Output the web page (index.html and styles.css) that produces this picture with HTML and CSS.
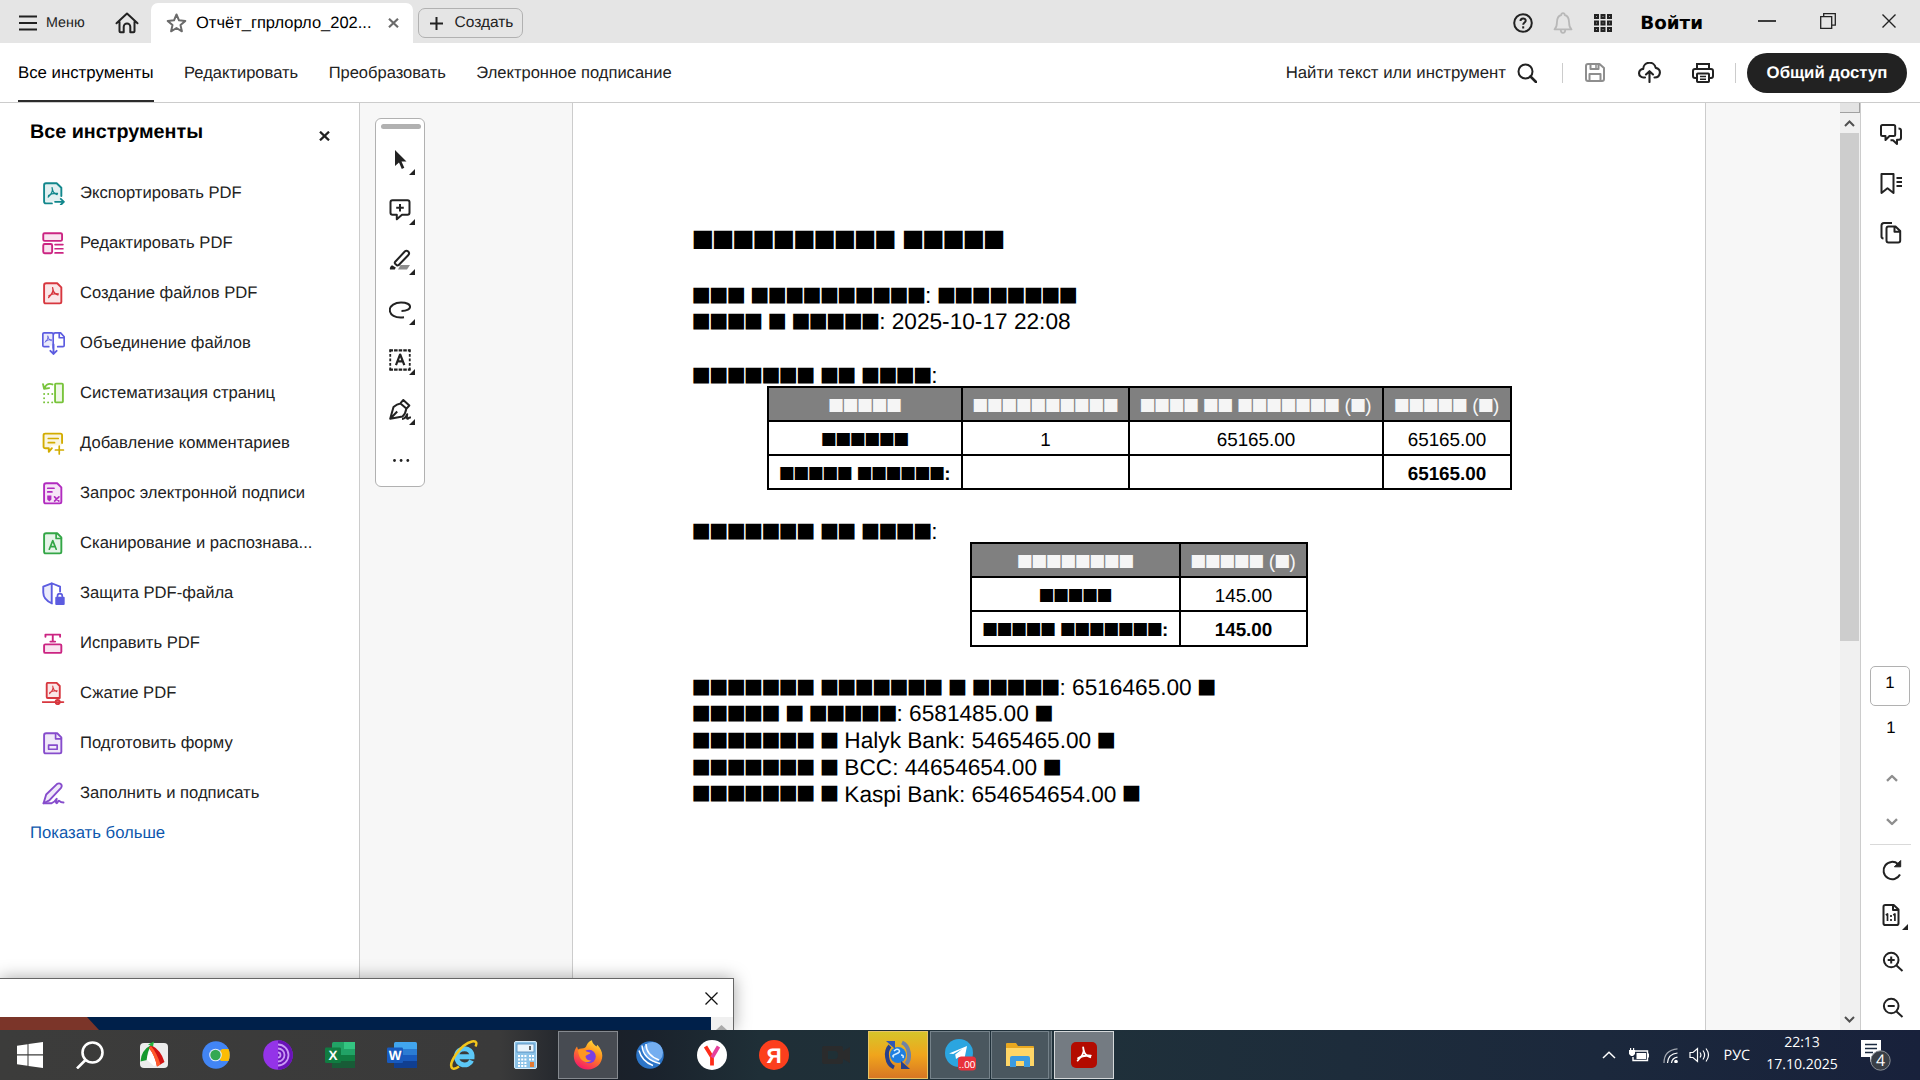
FILE: index.html
```html
<!DOCTYPE html>
<html lang="ru">
<head>
<meta charset="utf-8">
<title>Отчёт</title>
<link rel="stylesheet" href="styles.css">
</head>
<body>
<svg class="defs" width="0" height="0">
  <defs>
    <symbol id="pdfmark" viewBox="0 0 12 12"><path d="M5.400 1c1 2.800-.9 6.500-3.900 9.300M1.800 8.700c2.600-1.800 5.500-2.300 9-1.900M5.700 2.500c.3 2.500 2 4.400 4.700 5.400" fill="none" stroke="currentColor" stroke-width="1.300" stroke-linecap="round"/></symbol>
    <symbol id="corner" viewBox="0 0 6 6"><path d="M6 0v6H0z" fill="#222"/></symbol>
  </defs>
</svg>

<header class="titlebar">
  <div class="menu">
    <svg width="18" height="16" viewBox="0 0 18 16"><path d="M0 1.500h18M0 8h18M0 14.500h18" stroke="#222" stroke-width="2"/></svg>
    <span>Меню</span>
  </div>
  <svg class="home" width="24" height="22" viewBox="0 0 24 22" fill="none" stroke="#222" stroke-width="2" stroke-linejoin="round" stroke-linecap="round"><path d="M1.500 11.200 12 1.500l10.500 9.700M4.500 10v9.200q0 1 1 1H8.700v-5.500a3.300 3.300 0 0 1 6.600 0v5.500h3.200q1 0 1-1V10"/></svg>
  <div class="tab">
    <svg width="21" height="20" viewBox="0 0 21 20" fill="none" stroke="#6b6b6b" stroke-width="2" stroke-linejoin="round"><path d="m10.500 1.500 2.500 5.800 6.300.6-4.800 4.200 1.400 6.200-5.400-3.300-5.400 3.300 1.400-6.200-4.800-4.200 6.300-.6z"/></svg>
    <span class="tab-name">Отчёт_гпрлорло_202...</span>
    <svg class="tab-x" width="11" height="10" viewBox="0 0 11 10"><path d="m1 .8 9 8.400m0-8.400L1 9.200" stroke="#6b6b6b" stroke-width="2.200"/></svg>
  </div>
  <div class="create">
    <svg width="13" height="13" viewBox="0 0 13 13"><path d="M6.500 0v13M0 6.500h13" stroke="#222" stroke-width="2"/></svg>
    <span>Создать</span>
  </div>
  <div class="window-tools">
    <svg width="20" height="20" viewBox="0 0 20 20" fill="none" stroke="#222" stroke-width="2"><circle cx="10" cy="10" r="8.800"/><path d="M7.500 8c0-3.300 5.200-3.300 5.200-.2 0 1.800-2.500 1.800-2.500 4"/><path d="M10.200 13.300v2.200"/></svg>
    <svg class="bell" width="20" height="22" viewBox="0 0 20 22" fill="none" stroke="#b8b8b8" stroke-width="1.800" stroke-linejoin="round"><path d="M1.500 17.300c2.200-2 2.400-3.400 2.400-6.500 0-5 2.300-7.300 4.400-7.800 0-2.400 3.400-2.400 3.400 0 2.100.5 4.400 2.800 4.400 7.800 0 3.100.2 4.500 2.400 6.500z"/><path d="M7.800 18c0 3.700 4.400 3.700 4.400 0"/></svg>
    <svg class="apps" width="18" height="18" viewBox="0 0 18 18"><path d="M0 0h5v5H0zM6.500 0h5v5h-5zM13 0h5v5h-5zM0 6.500h5v5H0zM6.500 6.500h5v5h-5zM13 6.500h5v5h-5zM0 13h5v5H0zM6.500 13h5v5h-5zM13 13h5v5h-5z" fill="#222"/><path d="M2 2.500h1m5.500 0h1m5.500 0h1M2 9h1m5.500 0h1M15 9h1M2 15.500h1m5.500 0h1m5.500 0h1" stroke="#999"/></svg>
    <b class="login">Войти</b>
    <svg class="win-min" width="18" height="16" viewBox="0 0 18 16"><path d="M0 8h18" stroke="#111" stroke-width="1.600"/></svg>
    <svg class="win-max" width="16" height="16" viewBox="0 0 16 16" fill="none" stroke="#222" stroke-width="1.300"><path d="M.7 3.700h11v11.600H.7zM3.700 3.500V.7h11.600v11.500h-3.500"/></svg>
    <svg class="win-close" width="14" height="14" viewBox="0 0 14 14"><path d="m.5.500 13 13m0-13-13 13" stroke="#222" stroke-width="1.400"/></svg>
  </div>
</header>

<nav class="toolbar">
  <div class="modes">
    <span class="active">Все инструменты</span><span>Редактировать</span><span>Преобразовать</span><span>Электронное подписание</span>
  </div>
  <div class="actions">
    <span class="find">Найти текст или инструмент</span>
    <svg class="mag" width="20" height="20" viewBox="0 0 20 20" fill="none" stroke="#222" stroke-width="2"><circle cx="8.500" cy="8.500" r="7"/><path d="m13.500 13.500 5.500 5.500" stroke-width="2.600" stroke-linecap="round"/></svg>
    <i class="vline v1"></i>
    <svg class="save" width="20" height="19" viewBox="0 0 20 19" fill="none" stroke="#8e8e8e" stroke-width="2" stroke-linejoin="round"><path d="M1 3q0-2 2-2h11.500L19 5v11q0 2-2 2H3q-2 0-2-2zM5.500 1v5h8V1M4.500 18v-7h11v7"/><path d="M11 2v3" stroke-width="1.500"/></svg>
    <svg class="cloud" width="23" height="21" viewBox="0 0 23 21" fill="none" stroke="#222" stroke-width="2.100" stroke-linecap="round" stroke-linejoin="round"><path d="M7 15.500H5.500a4.300 4.300 0 0 1-.3-8.600 6.300 6.300 0 0 1 12.500-1c6 .5 5.500 9.600-1.200 9.600M11.500 20V9.500M8 12.500l3.500-3.300 3.500 3.300"/></svg>
    <svg class="print" width="22" height="20" viewBox="0 0 22 20" fill="none" stroke="#222" stroke-width="2"><path d="M5 6V1h12v5M5 15H3q-2 0-2-2V8q0-2 2-2h16q2 0 2 2v5q0 2-2 2h-2"/><rect x="5" y="10.500" width="12" height="8.500" rx=".8"/><path d="M8 13.500h6M8 16.300h6" stroke-width="1.400"/></svg>
    <i class="vline v2"></i>
    <b class="share">Общий доступ</b>
  </div>
</nav>

<main class="workspace">
  <aside class="sidebar">
    <div class="side-head"><h2>Все инструменты</h2><svg width="11" height="10" viewBox="0 0 11 10"><path d="m1 .7 9 8.600m0-8.600L1 9.300" stroke="#222" stroke-width="2.300"/></svg></div>
    <ul class="tools">
      <li><svg class="teal" viewBox="0 0 22 22"><path class="t" d="M3 2h11l4 4v13H3z"/><path class="l" d="M9.500 20.500H3.800q-1.800 0-1.800-1.800V3q0-1.800 1.800-1.800h10.200l4.500 4.300v8"/><use href="#pdfmark" x="4.500" y="4.500" width="11.500" height="11.500"/><path class="l" d="M12.500 19h8.500m-3-2.800 2.900 2.800L18 21.800"/></svg>Экспортировать PDF</li>
      <li><svg class="pink" viewBox="0 0 22 22"><g class="l b"><rect x="1.200" y="1.200" width="18" height="7.300" rx="1.300"/><rect x="1.200" y="11.500" width="8.500" height="8.800" rx="1.300"/></g><path class="l s" d="M12.500 12H20m-7.500 4H20m-7.500 4H20"/></svg>Редактировать PDF</li>
      <li><svg class="red" viewBox="0 0 22 22"><path class="l b" d="M4 1.200h10.500l4 4V19q0 1.500-1.500 1.500H3.500Q2 20.500 2 19V3q0-1.800 2-1.800z"/><use href="#pdfmark" x="4.800" y="4.500" width="12" height="12"/></svg>Создание файлов PDF</li>
      <li><svg class="indigo" viewBox="0 0 22 22"><path class="t" d="M1 1h9v12H1z"/><path class="l s" d="M6.500 14H2q-1.200 0-1.200-1.200V2Q.8.800 2 .8h7.500q1.200 0 1.200 1.500v13M15 14h5q1.200 0 1.200-1.200V4.500L17.800.8h-5.300q-1.500 0-1.500 1.500M16.500 1v4.500H21"/><use href="#pdfmark" x="2" y="3" width="8" height="8"/><path class="l" d="M11 12v9m-3-3 3 3 3-3"/></svg>Объединение файлов</li>
      <li><svg class="green" viewBox="0 0 22 22"><rect class="l b" x="12.500" y="1.500" width="7.500" height="18" rx=".8"/><path class="l" d="M10 2.300C6.500 1 4 2.500 2.500 5.500M1 2l1 4.500 4.700-.7"/><path class="l" stroke-dasharray=".1 3.800" d="M2 11.500h8.500M2 15.500v4h8.500"/></svg>Систематизация страниц</li>
      <li><svg class="gold" viewBox="0 0 22 22"><path class="t" d="M2 2h17v11H9l-2 6v-4H2z"/><path class="l" d="M9.500 15.500 6.500 19v-3.500H3.200Q1.500 15.500 1.500 14V3q0-1.500 1.500-1.500h14.700q1.500 0 1.500 1.500v7.500"/><path class="l s" d="M6 6.200h9.500M6 10.200h6M16.500 13.500V21M12.800 17.200h7.700"/></svg>Добавление комментариев</li>
      <li><svg class="magenta" viewBox="0 0 22 22"><path class="l b" d="M4 1.200h10.500l4 4V19q0 1.500-1.500 1.500H3.500Q2 20.500 2 19V3q0-1.800 2-1.800z"/><path class="l s" d="M5.500 6h6M5.500 9.500h4M12 14.200l4.200 4m0-4-4.200 4"/><path fill="currentColor" d="M5 13h4v3.800l-2 1.800-2-1.800z"/></svg>Запрос электронной подписи</li>
      <li><svg class="leaf" viewBox="0 0 22 22"><path class="l b" d="M4 1.200h10.500l4 4V19q0 1.500-1.500 1.500H3.500Q2 20.500 2 19V3q0-1.800 2-1.800z"/><path class="l s" d="M13.500 1.500v4.700h5"/><path class="l s" d="m7 16.500 3.300-8.300 3.300 8.300M8 14h4.700"/></svg>Сканирование и распознава...</li>
      <li><svg class="indigo" viewBox="0 0 22 22"><path class="t" d="M9 1 1.500 4v9q2 5 7.500 8z"/><path class="l" d="M9.500 20.500C4 18 1.200 14.500 1.200 10V4.500L9.300 1.200l8 3.300V9M9.300 1.200v19"/><path class="l s" d="M14.800 15v-1.500a2.300 2.300 0 0 1 4.600 0V15"/><rect x="12.700" y="14" width="9" height="8" rx="1" fill="currentColor"/></svg>Защита PDF-файла</li>
      <li><svg class="pink" viewBox="0 0 22 22"><rect class="l b" x="2" y="11.800" width="16.500" height="8.200" rx="1.200"/><path class="l" d="M3.300 4.500V2.500h14v2M10.300 2.500v6.700M8 9.200h4.600"/></svg>Исправить PDF</li>
      <li><svg class="red" viewBox="0 0 22 22"><path class="l b" d="M5.500.800h8.500l3 3v11.500H5.500q-1 0-1-1v-12q0-1.500 1-1.500z"/><use href="#pdfmark" x="6" y="3" width="9.500" height="9.500"/><path class="l s" d="M.5 19.200h20"/><circle cx="15" cy="19.200" r="2" class="l b"/></svg>Сжатие PDF</li>
      <li><svg class="violet" viewBox="0 0 22 22"><path class="l b" d="M4 1.200h10.500l4 4V19q0 1.500-1.500 1.500H3.500Q2 20.500 2 19V3q0-1.800 2-1.800z"/><path class="l s" d="M13 1.500v5h5.500M6.300 12.500h8.200v4H6.300z"/></svg>Подготовить форму</li>
      <li><svg class="violet" viewBox="0 0 22 22"><path class="l b" d="m4 12 10.500-10.200q2.200-1.200 3.800.5 1.200 1.600-.3 3.500L7 17.500l-5.500 2.800z"/><path class="l" d="M1.500 20.300h7.800c3-1 4.500-3.800 4.800-4.300-.5 2-1.300 4.300 0 4.300s1-2.500 2-2.500.5 1.800 4.500 1.800"/></svg>Заполнить и подписать</li>
    </ul>
    <a class="more">Показать больше</a>
  </aside>

  <section class="viewer">
    <div class="gutter">
      <div class="quick">
        <i class="grip"></i>
        <div><svg viewBox="0 0 22 22"><path d="M6 1v16l4-3.500L12.800 20l2.500-1.200-2.800-6.300h5z" fill="#222"/></svg><svg class="c"><use href="#corner"/></svg></div>
        <div><svg viewBox="0 0 22 22" class="k"><path d="M3.500 1.200h15q2 0 2 2v10.600q0 2-2 2h-5.500L7.800 20.300v-4.500H3.500q-2 0-2-2V3.200q0-2 2-2zM11 5v7.500M7.200 8.700h7.600"/></svg><svg class="c"><use href="#corner"/></svg></div>
        <div><svg viewBox="0 0 22 22" class="k"><path d="M11.500 16H21l-3 4.500H9z" fill="#8e8e8e" stroke="none"/><path d="m6 13 10-10.700q1.500-1.300 3.200.2 1.700 1.600.2 3.500l-9.900 10.200q-1 .6-1.700 0l-1.700-1.500q-.7-.8-.1-1.700z"/><path d="M1 20.500c-.5-1 0-3 2-4.300l3.800 2.300-1 2z" fill="#222" stroke="none"/></svg><svg class="c"><use href="#corner"/></svg></div>
        <div><svg viewBox="0 0 22 22" class="k"><path d="M15 18.300C6 19.500.8 15.800.8 11 .8 6.500 6 3.500 12 3.500c12 0 12 8.500.5 8.500"/></svg><svg class="c"><use href="#corner"/></svg></div>
        <div><svg viewBox="-.5 -.5 23 23" class="k"><path d="M0 1h22M0 21h22" stroke-dasharray="3.700 1.100" stroke-width="2.400"/><path d="M.8 0v22M21.200 0v22" stroke-dasharray="3 1.700" stroke-width="1.900"/><path d="m6.800 16.300 4.200-11h.3l4.200 11M8.300 12.500h5.700" stroke-width="2.300"/></svg><svg class="c"><use href="#corner"/></svg></div>
        <div><svg viewBox="0 0 22 22" class="k"><path d="M1.200 19.800 4.500 8q3.500-3.200 7-3.600l5.800 5.200q-.7 5-3.800 7.800zM1.500 19.500l6.700-7M11.300 4.300l3-3.300 6 5.500-3 3.300M13 20c3 0 4-1.500 5.200-4.800-.5 3-.5 4.600.3 4.600 1 0 .8-1.800 3.500-1.300"/></svg><svg class="c"><use href="#corner"/></svg></div>
        <div><svg viewBox="0 0 22 22"><g fill="#222"><circle cx="5.500" cy="11.500" r="1.400"/><circle cx="12.100" cy="11.500" r="1.400"/><circle cx="18.800" cy="11.500" r="1.400"/></g></svg></div>
      </div>
    </div>
    <article class="page">
      <h1><b class="s">■■■■■■■■■■</b> <b class="s">■■■■■</b></h1>
      <p><b class="s">■■■</b> <b class="s">■■■■■■■■■■</b>: <b class="s">■■■■■■■■</b></p>
      <p><b class="s">■■■■</b> <b class="s">■</b> <b class="s">■■■■■</b>: 2025-10-17 22:08</p>
      <p class="label"><b class="s">■■■■■■■</b> <b class="s">■■</b> <b class="s">■■■■</b>:</p>
      <div class="grid income">
        <div class="th"><b class="s">■■■■■</b></div><div class="th"><b class="s">■■■■■■■■■■</b></div><div class="th"><b class="s">■■■■</b> <b class="s">■■</b> <b class="s">■■■■■■■</b> (<b class="s">■</b>)</div><div class="th"><b class="s">■■■■■</b> (<b class="s">■</b>)</div>
        <div><b class="s">■■■■■■</b></div><div>1</div><div>65165.00</div><div>65165.00</div>
        <div class="sum"><b class="s">■■■■■</b> <b class="s">■■■■■■</b>:</div><div></div><div></div><div class="sum">65165.00</div>
      </div>
      <p class="label second"><b class="s">■■■■■■■</b> <b class="s">■■</b> <b class="s">■■■■</b>:</p>
      <div class="grid expense">
        <div class="th"><b class="s">■■■■■■■■</b></div><div class="th"><b class="s">■■■■■</b> (<b class="s">■</b>)</div>
        <div><b class="s">■■■■■</b></div><div>145.00</div>
        <div class="sum"><b class="s">■■■■■</b> <b class="s">■■■■■■■</b>:</div><div class="sum">145.00</div>
      </div>
      <div class="totals">
        <p><b class="s">■■■■■■■</b> <b class="s">■■■■■■■</b> <b class="s">■</b> <b class="s">■■■■■</b>: 6516465.00 <b class="s">■</b></p>
        <p><b class="s">■■■■■</b> <b class="s">■</b> <b class="s">■■■■■</b>: 6581485.00 <b class="s">■</b></p>
        <p><b class="s">■■■■■■■</b> <b class="s">■</b> Halyk Bank: 5465465.00 <b class="s">■</b></p>
        <p><b class="s">■■■■■■■</b> <b class="s">■</b> BCC: 44654654.00 <b class="s">■</b></p>
        <p><b class="s">■■■■■■■</b> <b class="s">■</b> Kaspi Bank: 654654654.00 <b class="s">■</b></p>
      </div>
    </article>
    <div class="scroll">
      <i class="split"></i>
      <svg width="20" height="20" viewBox="0 0 20 20"><path d="m5 13 4.500-4.500L14 13" fill="none" stroke="#505050" stroke-width="2"/></svg>
      <i class="thumb"></i>
      <svg class="down" width="20" height="20" viewBox="0 0 20 20"><path d="m5 7 4.500 4.500L14 7" fill="none" stroke="#505050" stroke-width="2"/></svg>
    </div>
  </section>

  <aside class="rail">
    <svg class="r1" width="24" height="24" viewBox="0 0 24 24"><path d="M3.500 2h11.200q1.500 0 1.500 1.500v8q0 1.500-1.500 1.500h-4.200L6.500 17v-4h-3Q2 13 2 11.500v-8Q2 2 3.500 2zM19.500 5.500q2.500 0 2.500 2v7.300q0 2-2 2h-2V21l-4-3.800h-2.500"/></svg>
    <svg class="r2" width="24" height="24" viewBox="0 0 24 24"><path d="M2.500 2h12v19l-6-4.800L2.500 21zM17.500 6H23m-5.500 4H23m-5.500 4H23"/></svg>
    <svg class="r3" width="24" height="24" viewBox="0 0 24 24"><path d="M4.500 17.500q-2-.3-2-2v-11Q2.500 2 5 2h8M9.500 5.500h7l4.700 4.500v9.500q0 2-2 2H9.500q-2 0-2-2v-12q0-2 2-2zM15.500 5.500v5.300h5.500"/></svg>
    <div class="page-box">1</div>
    <div class="page-total">1</div>
    <svg class="r4" width="12" height="8" viewBox="0 0 12 8"><path d="M1 6.800 6 2l5 4.800"/></svg>
    <svg class="r5" width="12" height="8" viewBox="0 0 12 8"><path d="M1 1.200 6 6l5-4.800"/></svg>
    <i class="hline"></i>
    <svg class="r6" width="24" height="24" viewBox="0 0 24 24"><path d="M20 16.500A8.700 8.700 0 1 1 18 6"/><path d="M20.700 2.500v6.300h-6.300z" fill="#222" stroke-width="1"/></svg>
    <div class="fit"><svg width="20" height="24" viewBox="0 0 20 24"><path d="M4.200 2h8.500l4.800 4.500v13.700q0 1.800-1.800 1.800H4.200q-1.700 0-1.700-1.800V3.800Q2.500 2 4.200 2zM12 2v5h5.500"/><path d="m4.800 12 1.700-1v7M12.200 12l1.700-1v7M10 12v2m0 2v2" stroke-width="1.700"/></svg><svg class="c"><use href="#corner"/></svg></div>
    <svg class="r8" width="24" height="24" viewBox="0 0 24 24"><circle cx="10.200" cy="10" r="7.300"/><path d="m15.500 15.500 6 5.500M6.700 10h7M10.200 6.500v7"/></svg>
    <svg class="r9" width="24" height="24" viewBox="0 0 24 24"><circle cx="10.200" cy="10" r="7.300"/><path d="m15.500 15.500 6 5.500M6.700 10h7"/></svg>
  </aside>
</main>

<div class="popup">
  <div class="popup-head"><svg width="13" height="13" viewBox="0 0 13 13"><path d="m.5.500 12 12m0-12-12 12" stroke="#111" stroke-width="1.300"/></svg></div>
  <div class="popup-body"><svg class="banner" width="711" height="13" viewBox="0 0 711 13"><path fill="#00204a" d="M0 0h711v13H0z"/><path fill="#7b3529" d="M0 0h87l12 13H0z"/></svg><div class="popup-scroll"><svg width="22" height="13" viewBox="0 0 22 13"><path d="m5 13 5.500-5 5.500 5z" fill="#aaa"/></svg></div></div>
</div>

<footer class="taskbar">
  <div class="cell"><svg width="26" height="26" viewBox="0 0 26 26"><path fill="#fff" d="M0 3.700 10.500 2.200v10.100H0zM11.500 2.100 26 0v12.300H11.500zM0 13.500h10.500v10.200L0 22.200zM11.500 13.500H26V26l-14.500-2z"/></svg></div>
  <div class="cell find-cell"><svg width="28" height="28" viewBox="0 0 28 28" fill="none" stroke="#fff" stroke-width="2.600"><circle cx="16.500" cy="11.500" r="10"/><path d="M9.500 19 1 27.500"/></svg></div>
  <div class="cell"><svg width="28" height="28" viewBox="0 0 28 28"><rect y="2" width="28" height="25" rx="4" fill="#ececec"/><path d="M12 3.500Q1 9 .5 20.500l6.500-1.500Q7 10 12 3.500z" fill="#159a2e"/><path d="M10 8 6.500 18.500 14 25l6-2z" fill="#fff"/><path d="M11 4q10 5 13.500 17L17 25.500Q15 14 9 7z" fill="#d21313"/><path d="M9 7q6 8 8 18.500l3.500-2Q17 12 11 5z" fill="#ff5a2c"/><path d="m8 3.500 6-3-1 5z" fill="#22b53c"/></svg></div>
  <div class="cell"><svg width="28" height="28" viewBox="0 0 28 28"><circle cx="14" cy="14" r="13.800" fill="#4285f4"/><path d="M14 14 20 8h6.500q2.500 6 0 12H19z" fill="#fbbc05"/><path d="M20 8h6.500l-3-4z" fill="#4285f4"/><circle cx="13.500" cy="14" r="6.300" fill="#dfe9fb"/><circle cx="13.500" cy="14" r="5.200" fill="#34a853"/></svg></div>
  <div class="cell"><svg width="30" height="30" viewBox="0 0 30 30"><circle cx="15" cy="15" r="14.800" fill="#9433e8"/><path d="M15 .2a14.800 14.800 0 0 1 0 29.600z" fill="#6a12b8"/><path d="M15 4.500a10.500 10.500 0 0 1 0 21M15 8.500a6.500 6.500 0 0 1 0 13M15 12.500a2.500 2.500 0 0 1 0 5" fill="none" stroke="#c99af5" stroke-width="1.800"/></svg></div>
  <div class="cell"><svg width="30" height="26" viewBox="0 0 30 26"><rect x="7" width="23" height="26" rx="1.500" fill="#21a366"/><path fill="#33c481" d="M19 0h11v7H19z"/><path fill="#107c41" d="M7 13h23v6H7z"/><path fill="#185c37" d="M7 19h23v7H7z"/><rect y="5.500" width="16" height="15.500" rx="1.200" fill="#107c41"/><text x="8" y="18" class="office">X</text></svg></div>
  <div class="cell"><svg width="30" height="26" viewBox="0 0 30 26"><rect x="7" width="23" height="26" rx="1.500" fill="#41a5ee"/><path fill="#2b7cd3" d="M7 7h23v6H7z"/><path fill="#185abd" d="M7 13h23v6H7z"/><path fill="#103f91" d="M7 19h23v7H7z"/><rect y="5.500" width="16" height="15.500" rx="1.200" fill="#185abd"/><text x="8" y="18" class="office">W</text></svg></div>
  <div class="cell"><svg width="30" height="30" viewBox="0 0 30 30" fill="none"><path d="M6.500 16.800H23C23.500 6 8 6 7.500 16.500c0 9.500 12 11 15 4" stroke="#5cc8f7" stroke-width="5"/><path d="M3.500 28.500C-2 24 12 4 23 1.500c5-1 5 2 3.500 5M3.500 28.500c2 1 4.500-.5 6.500-2" stroke="#f3c61c" stroke-width="2.400"/></svg></div>
  <div class="cell calc"><svg width="23" height="28" viewBox="0 0 23 28"><rect x=".5" y=".5" width="22" height="27" rx="1.500" fill="#8cc3e8" stroke="#d6ebf9"/><rect x="3" y="3" width="17" height="8" fill="#eaf5fc" stroke="#4d86b8" stroke-width=".8"/><path d="M4 15h9M4 18.500h9M4 22h9M4 25h9" stroke="#fff" stroke-width="2" stroke-dasharray="2 1.200"/><path d="M15 15h5M15 18.500h5" stroke="#fff" stroke-width="2" stroke-dasharray="2 1"/><path d="M16 21h4v5h-4z" fill="#e07a35"/><path d="M16 5v4" stroke="#333" stroke-width="1.500"/></svg></div>
  <div class="cell tile"><svg width="30" height="30" viewBox="0 0 30 30"><defs><linearGradient id="fx" x1=".8" y1="0" x2=".3" y2="1"><stop offset="0" stop-color="#ffe23c"/><stop offset=".45" stop-color="#ff8a1c"/><stop offset="1" stop-color="#f5156c"/></linearGradient></defs><path d="M15 29.500C6.500 29.500.8 23.500.8 16c0-4 1.500-7.500 3.200-9.500l1 3q1.500-1 3.500-1c3-.3 4.500-1 5-3Q15 1.500 19 .2c0 3 3 5 4.500 6.300l.8-1.700c3 3 5 7 5 11 0 7.500-6 13.700-14.300 13.700z" fill="url(#fx)"/><circle cx="16" cy="16.500" r="6.800" fill="#7b3fe4"/><path d="M5 10c4-1.500 7 0 8.500 1.500l4 1.200c-1 2.300-4.500 1.500-5 4 .8 3 3 4 6 3.800-6 4.500-13-.5-13.500-10.500z" fill="#ff9722"/></svg></div>
  <div class="cell"><svg width="28" height="28" viewBox="0 0 28 28"><circle cx="14" cy="14" r="13.800" fill="#2c75c8"/><circle cx="16.500" cy="11.500" r="10.500" fill="#74aef0"/><path d="M6 4q0 16 19 18.500Q8 26 3.500 8z" fill="#2c75c8"/><path d="M6 4.500q1 14 18 18M10 3q0 11 13 16M3 9.500q3 11 14 15" fill="none" stroke="#fff" stroke-width="1.500"/></svg></div>
  <div class="cell"><svg width="30" height="30" viewBox="0 0 30 30"><circle cx="15" cy="15" r="15" fill="#fff"/><path d="M15 25.500V17L8.500 6.500" fill="none" stroke="#ff2d1a" stroke-width="3.800"/><path d="m15 17.500 6.500-11" stroke="#e5409b" stroke-width="3.800"/></svg></div>
  <div class="cell"><svg width="30" height="30" viewBox="0 0 30 30"><circle cx="15" cy="15" r="15" fill="#fc3f1d"/><text x="15" y="22.500" class="ya">Я</text></svg></div>
  <div class="cell"><svg width="29" height="20" viewBox="0 0 29 20"><path d="M2 1h17q2 0 2 2v3l7-4v16l-7-4v3q0 2-2 2H2q-2 0-2-2V3q0-2 2-2z" fill="#2a2b2c"/><path d="M6 6h7q3 0 3 4t-3 4H6z" fill="#1f3036"/></svg></div>
  <div class="cell tile sync"><svg width="32" height="32" viewBox="0 0 32 32"><circle cx="16" cy="16" r="8" fill="#1f7fe0"/><path d="M12 12q3-3 5-1t-3 4-2 3M19 16q3 0 2 3" stroke="#d5efff" stroke-width="1.500" fill="none"/><path d="M12 28.500C4 25 3 12 8 7" fill="none" stroke="#27408b" stroke-width="4"/><path d="M4 2h9v8z" fill="#3158b5"/><path d="M20 3.500c8 3.500 9 16.500 4 21.500" fill="none" stroke="#6f83a5" stroke-width="4"/><path d="M28 30h-9v-8z" fill="#27408b"/></svg></div>
  <div class="cell tile tg"><svg width="34" height="34" viewBox="0 0 34 34"><circle cx="16" cy="15" r="14" fill="#2ba5e0"/><path d="m6 15.500 18-7.500-3 15-5-4-3 2-.8-4.500 7-5.500-9 5z" fill="#fff"/><rect x="15" y="18.500" width="18" height="14" rx="3.500" fill="#e8323c"/><text x="24" y="29.500" class="badge">..00</text></svg></div>
  <div class="cell tile folder"><svg width="28" height="24" viewBox="0 0 28 24"><path d="M0 1q0-1 1-1h9l2 3h15q1 0 1 1v19H0z" fill="#e9a820"/><path d="M0 5h28v18H0z" fill="#ffd667"/><path d="M4 24v-9q0-2 2-2h16q2 0 2 2v9h-6v-6h-8v6z" fill="#3c9be0"/></svg></div>
  <div class="cell tile acro"><svg width="26" height="26" viewBox="0 0 26 26" color="#fff"><rect width="26" height="26" rx="5" fill="#b30b00"/><use href="#pdfmark" x="4.500" y="4" width="17" height="17"/></svg></div>
  <div class="tray">
    <svg width="14" height="8" viewBox="0 0 14 8"><path d="m1 7 6-5.800L13 7" fill="none" stroke="#fff" stroke-width="1.500"/></svg>
    <svg class="bat" width="20" height="14" viewBox="0 0 20 14"><path d="M6 3h12.500v9.500H4V9" fill="none" stroke="#fff" stroke-width="1.400"/><path d="M7.500 5H17v6H7.500zM0 2h6v4L4 8H2L0 6zM1 0h1.200v2H1zM4 0h1.200v2H4zM19 5.500h1v4h-1z" fill="#fff"/></svg>
    <svg class="wifi" width="15" height="15" viewBox="0 0 15 15" fill="none" stroke="#fff" stroke-width="1.200"><path d="M1 15Q1 2 14.500.8" opacity=".6"/><path d="M4.500 15Q5 6 14.500 5M8.500 15q.5-5 6-5.800"/><circle cx="13" cy="13.500" r="1.200" fill="#fff"/></svg>
    <svg class="vol" width="21" height="16" viewBox="0 0 21 16" fill="none" stroke="#fff" stroke-width="1.200"><path d="M1 5.500h3L8.500 1.500v13L4 10.500H1zM11 5.500q1.800 2.500 0 5M14 3.500q3.200 4.500 0 9M17 1.500q5 6.500 0 13"/></svg>
    <span class="lang">РУС</span>
    <div class="clock"><span>22:13</span><span>17.10.2025</span></div>
    <svg class="note" width="32" height="32" viewBox="0 0 32 32"><path d="M0 1h20v17h-5l-6 5v-5H0z" fill="#fff"/><path d="M4 5.500h12M4 9.500h12M4 13.500h8" stroke="#1b2b40" stroke-width="1.500"/><circle cx="19.500" cy="21.500" r="9.700" fill="#3a3f46" stroke="#8b9097"/><text x="19.500" y="27" class="count">4</text></svg>
  </div>
</footer>
</body>
</html>
```
FILE: styles.css
```css
*{box-sizing:border-box}
body{margin:0;width:1920px;height:1080px;overflow:hidden;display:flex;flex-direction:column;position:relative;font-family:"Liberation Sans",Arial,sans-serif;font-size:16.750px;color:#222;background:#fff;text-rendering:geometricPrecision}
svg{display:block;flex:none}
.defs{position:absolute}
h1,h2,p,ul{margin:0;padding:0;font-weight:400}
ul{list-style:none}

.titlebar{height:43px;flex:none;background:#e5e5e5;display:flex;align-items:flex-start;padding-left:19px}
.menu{display:flex;align-items:center;gap:9px;height:46px;font-size:14.300px;width:95.500px}
.home{margin-top:12px}
.tab{margin:3px 0 0 12.500px;width:262px;height:40px;background:#fff;border-radius:7px 7px 0 0;display:flex;align-items:center;padding:0 14.500px 0 14.500px;font-size:16.500px;color:#000}
.tab-name{margin-left:9.500px;flex:1}
.create{margin:8px 0 0 5px;width:105px;height:30px;border:1px solid #b1b1b1;border-radius:7px;display:flex;align-items:center;padding-left:10.500px;gap:12px;font-size:15.500px}
.window-tools{margin-left:auto;display:flex;align-items:center;height:46px}
.bell{margin-left:20px}
.apps{margin-left:20.500px}
.login{font:bold 18.300px "DejaVu Sans",sans-serif;color:#000;margin-left:28.500px}
.win-min{margin:-5px 0 0 55px}
.win-max{margin:-5px 0 0 44px}
.win-close{margin:-5px 24px 0 46px}

.toolbar{height:60px;flex:none;border-bottom:1px solid #ccc;display:flex;justify-content:space-between;align-items:stretch}
.modes{display:flex;gap:30.500px;padding-left:18px}
.modes span{line-height:60px;height:59px;font-size:16.520px}
.modes .active{color:#000;border-bottom:2px solid #2c2c2c;font-size:16.800px}
.actions{display:flex;align-items:center;padding:0 13px 0 0}
.mag{margin-left:11px}
.vline{width:1px;height:20px;background:#ccc}
.v1{margin-left:25px}
.save{margin-left:22px}
.cloud{margin-left:33px}
.print{margin-left:31px}
.v2{margin-left:21px}
.share{margin-left:11px;width:160px;height:40px;border-radius:20px;background:#222;color:#fff;text-align:center;line-height:39px}

.workspace{flex:1;min-height:0;display:flex}
.sidebar{width:360px;border-right:1px solid #ccc;padding:15px 29px 0 30px}
.side-head{display:flex;justify-content:space-between;align-items:center;height:29px}
.side-head h2{font-weight:bold;font-size:19.750px;color:#000;margin-bottom:1px}
.side-head svg{margin:7px 0 0}
.tools{margin-top:21px}
.tools li{height:50px;display:flex;align-items:center;gap:15px;padding-left:12px;color:#222;font-size:16.620px}
.tools li svg{width:23px;height:23px}
.l{fill:none;stroke:currentColor;stroke-width:1.800;stroke-linecap:round;stroke-linejoin:round}
.s{stroke-width:1.600}
.b{fill:currentColor;fill-opacity:.12}
.t{fill:currentColor;fill-opacity:.12}
.tools .teal{color:#12878c}
.tools .pink{color:#cb2482}
.tools .red{color:#d7373f}
.tools .indigo{color:#5c5ce0}
.tools .green{color:#79c43c}
.tools .gold{color:#d2ac00}
.tools .magenta{color:#b12bbf}
.tools .leaf{color:#33a646}
.tools .violet{color:#864ccc}
.more{display:block;line-height:30px;color:#0d57ad;font-size:16.700px}

.viewer{flex:1;display:flex;background:#f7f7f7}
.gutter{width:213px;padding:15px 0 0 15px;border-right:1px solid #ccc}
.quick{width:50px;height:369px;border:1px solid #b1b1b1;border-radius:6px;background:#fff}
.grip{display:block;width:40px;height:5px;border-radius:2.500px;background:#b1b1b1;margin:5px 0 6px 5px}
.quick div{height:50px;display:grid;place-items:center;position:relative}
.quick div>svg:first-child{width:22px;height:22px}
.k{fill:none;stroke:#222;stroke-width:2;stroke-linejoin:round;stroke-linecap:butt}
.quick .c{position:absolute;width:6px;height:6px;left:33px;top:34px}
.page{width:1133px;background:#fff;border-right:1px solid #ccc;padding:120.900px 0 0 119.500px;font-size:22.660px;line-height:26.700px;color:#000;margin-right:134px;white-space:nowrap}
.page h1{font-size:26.430px;line-height:32px;margin-bottom:25.900px}
.page b.s{font:400 .905em/0 "DejaVu Sans",sans-serif;letter-spacing:-.096em;margin-left:-.045em;margin-right:.045em;position:relative;top:-.11em}
.label{margin-top:26.600px}
.label.second{margin-top:27.800px}
.grid{display:grid;gap:2px;padding:2px;background:#000;font-size:18.880px;line-height:35px;text-align:center;margin-top:-2.500px}
.grid div{background:#fff;height:100%}
.grid .th{background:#808080;color:#f5f5f5}
.grid .sum{font-weight:bold}
.income{width:745px;grid-template-columns:192px 165px 252px 126px;grid-template-rows:32px 32px 32px;margin-left:74.500px}
.expense{width:338px;grid-template-columns:207px 125px;grid-template-rows:32px 32px 33px;margin-left:277.500px}
.totals{margin-top:26.800px}
.scroll{width:20px;background:#f0f0f0;display:flex;flex-direction:column}
.split{height:10px;background:#e3e3e3;border-right:1px solid #a0a0a0;border-bottom:1px solid #a0a0a0}
.thumb{height:508px;width:19px;background:#cdcdcd}
.down{margin-top:auto}

.rail{width:60px;border-left:1px solid #ccc;padding-left:9px;display:flex;flex-direction:column;align-items:flex-start}
.rail svg{fill:none;stroke:#222;stroke-width:2;stroke-linejoin:round}
.rail .r1{margin:20px 0 0 9px}
.rail .r2{margin:25px 0 0 9px}
.rail .r3{margin:25px 0 0 9px}
.page-box{width:40px;height:40px;border:1px solid #b1b1b1;border-radius:5px;margin-top:421px;text-align:center;line-height:31px;color:#000}
.page-total{width:42px;text-align:center;margin-top:12px;line-height:20px;color:#000}
.rail .r4,.rail .r5{stroke:#8e8e8e;stroke-width:2.400}
.rail .r4{margin:36px 0 0 16px}
.rail .r5{margin:36px 0 0 16px}
.hline{width:41px;height:1px;background:#d9d9d9;margin-top:18px}
.rail .r6{margin:13px 0 0 10px}
.fit{margin:21px 0 0 11px;position:relative}
.fit .c{position:absolute;width:6px;height:6px;left:21px;top:21px;stroke:none}
.rail .r8{margin:23px 0 0 11px}
.rail .r9{margin:22px 0 0 11px}

.popup{position:absolute;left:0;top:978px;width:734px;height:52px;background:#fff;border-top:1px solid #666;border-right:1px solid #666;box-shadow:0 0 16px rgba(0,0,0,.35)}
.popup-head{height:38px;display:flex;justify-content:flex-end;align-items:center;padding-right:15px}
.popup-body{display:flex}
.popup-scroll{flex:1;background:#f0f0f0}

.taskbar{position:relative;height:50px;flex:none;display:flex;align-items:stretch;background:linear-gradient(90deg,#3c3c3b 0,#3a3a3a 500px,#1a1f28 590px,#1a222c 650px,#1f2f37 760px,#1f303a 1100px,#1b283c 1600px,#18213b 1920px)}
.cell{width:62px;display:grid;place-items:center}
.cell:first-child{width:59px}
.find-cell{margin-right:2px}
.calc{padding-right:2px}
.tile{width:60px;margin:1px 1px;background:#474b52;border:1px solid #85898f}
.sync{background:linear-gradient(#d6c52a,#f0a51c 50%,#d87624);border-color:#e8c465}
.tg{background:#4a575f;border-color:#75828a}
.folder{width:58px;background:#4a575f;border-color:#75828a;box-shadow:2px 0 0 0 #4a575f,3px 0 0 0 #75828a;margin-left:0;margin-right:4px}
.acro{background:#747b82;border-color:#d5d8da}
.office{font:bold 13.500px "Liberation Sans",sans-serif;fill:#fff;text-anchor:middle}
.ya{font:bold 21px "Liberation Sans",sans-serif;fill:#fff;text-anchor:middle}
.badge{font:10px "Liberation Sans",sans-serif;fill:#fff;text-anchor:middle}
.count{font:16px "Open Sans",sans-serif;fill:#fff;text-anchor:middle}
.tray{margin-left:auto;display:flex;align-items:center;color:#fff;font-family:"Open Sans",sans-serif;font-size:14px;padding-right:27px}
.bat{margin-left:13px}
.wifi{margin-left:14px}
.vol{margin-left:11px}
.lang{margin-left:14px;font-size:14.300px}
.clock{display:flex;flex-direction:column;align-items:center;line-height:22px;width:90px;margin:-2px 0 0 7px}
.note{margin-left:14px}
```
